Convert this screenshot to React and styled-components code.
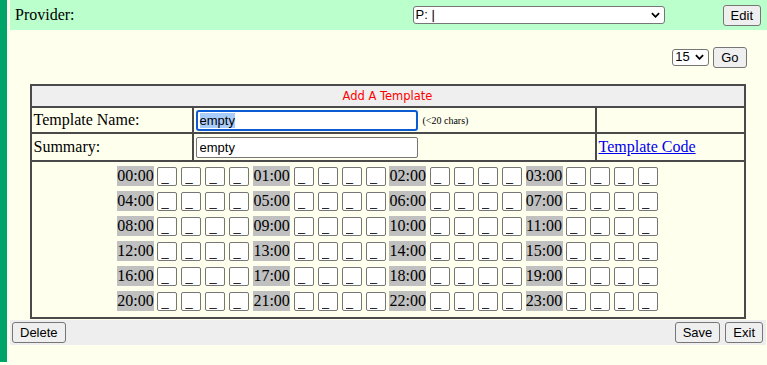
import styled, { createGlobalStyle } from 'styled-components'

const GlobalStyle = createGlobalStyle`
	html, body {
		margin: 0;
		background: #ffffee;
	}
`

const hours = Array.from({ length: 24 }, (_, i) => `${String(i).padStart(2, '0')}:00`)
const rows = [0, 1, 2, 3, 4, 5].map((r) => hours.slice(r * 4, r * 4 + 4))

function Dropdown({ width, height, value }) {
	return (
		<SelectBox>
			<Select width={width} height={height} defaultValue={value}>
				<option>{value}</option>
			</Select>
			<Chevron viewBox='0 0 10 6' aria-hidden='true'>
				<path d='M1 1l4 4 4-4' />
			</Chevron>
		</SelectBox>
	)
}

function App() {
	return (
		<Page>
			<GlobalStyle />
			<Stripe />
			<Main>
				<Header>
					<Label>Provider:</Label>
					<Dropdown width='252px' value='P: |' />
					<Button style={{ marginLeft: 58 }}>Edit</Button>
				</Header>

				<Toolbar>
					<Dropdown width='37px' height='17px' value='15' />
					<Button>Go</Button>
				</Toolbar>

				<Frame>
					<Caption>Add A Template</Caption>

					<Cell>
						<Label>Template Name:</Label>
					</Cell>
					<Cell>
						<FocusedField>
							<Selected>empty</Selected>
						</FocusedField>
						<Hint>(&lt;20 chars)</Hint>
					</Cell>
					<Cell />

					<Cell>
						<Label>Summary:</Label>
					</Cell>
					<Cell>
						<Field readOnly value='empty' />
					</Cell>
					<Cell>
						<Link href='#'>Template Code</Link>
					</Cell>

					<Schedule>
						{rows.map((row, r) => (
							<HourRow key={r}>
								{row.map((hour) => (
									<HourGroup key={hour}>
										<Hour>{hour}</Hour>
										{[0, 1, 2, 3].map((q) => (
											<Slot key={q} readOnly value='_' />
										))}
									</HourGroup>
								))}
							</HourRow>
						))}
					</Schedule>
				</Frame>

				<Footer>
					<Button>Delete</Button>
					<Spacer />
					<Button>Save</Button>
					<Button>Exit</Button>
				</Footer>
			</Main>
		</Page>
	)
}

export default App

const Page = styled.div`
	display: flex;
	width: 767px;
	height: 365px;
	background: #ffffee;
	font-family: 'Liberation Serif', 'Times New Roman', serif;
	font-size: 16px;
	color: #000;
`
const Stripe = styled.div`
	width: 7px;
	height: 362px;
	background: #00a468;
	flex: none;
`
const Main = styled.div`
	flex: 1;
	margin-left: 3px;
	display: flex;
	flex-direction: column;
`
const Header = styled.div`
	height: 30px;
	background: #bbffcc;
	display: flex;
	align-items: center;
	padding: 0 6px 0 5px;

	> span:first-child {
		flex: 1;
	}
`
const Label = styled.span`
	font-size: 16px;
`
const SelectBox = styled.div`
	position: relative;
	display: flex;
	align-items: center;
`
const Select = styled.select`
	width: ${({ width }) => width};
	height: ${({ height }) => height || '18px'};
	appearance: none;
	font-family: 'Liberation Sans', Arial, sans-serif;
	font-size: 13px;
	line-height: 14px;
	border: 1px solid #767676;
	border-radius: 3px;
	background: #fff;
	color: #000;
	padding: 0 0 0 2px;
	box-sizing: border-box;
	outline: none;
`
const Chevron = styled.svg`
	position: absolute;
	right: 5px;
	top: 50%;
	width: 9px;
	height: 6px;
	margin-top: -3px;
	fill: none;
	stroke: #000;
	stroke-width: 2;
	pointer-events: none;
`
const Button = styled.button`
	height: 21px;
	padding: 0 7px;
	font-family: 'Liberation Sans', Arial, sans-serif;
	font-size: 13px;
	color: #000;
	background: #efefef;
	border: 1px solid #767676;
	border-radius: 3px;
	box-sizing: border-box;
`
const Toolbar = styled.div`
	width: 716px;
	margin: 17px auto 0;
	height: 20px;
	display: flex;
	justify-content: flex-end;
	align-items: center;
	gap: 4px;
`
const Frame = styled.div`
	width: 716px;
	box-sizing: border-box;
	margin: 17px 0 0 19.5px;
	padding: 2px;
	gap: 2px;
	background: #4a4a4a;
	display: grid;
	grid-template-columns: 160px 401px 147px;
	grid-template-rows: 20px 24px 26px 155px;
`
const Caption = styled.div`
	grid-column: 1 / -1;
	background: #efefef;
	color: #ff0000;
	font-family: 'DejaVu Sans', Verdana, sans-serif;
	font-size: 11.5px;
	display: flex;
	align-items: center;
	justify-content: center;
`
const Cell = styled.div`
	background: #ffffee;
	display: flex;
	align-items: center;
	padding-left: 2px;
`
const Field = styled.input`
	width: 222px;
	height: 21px;
	box-sizing: border-box;
	border: 1px solid #767676;
	border-radius: 2px;
	background: #fff;
	padding: 1px 3px;
	font-family: 'Liberation Sans', Arial, sans-serif;
	font-size: 13px;
	color: #000;
	outline: none;
`
const FocusedField = styled.div`
	width: 222px;
	height: 21px;
	box-sizing: border-box;
	border: 2px solid #0b5bd3;
	border-radius: 3px;
	background: #fff;
	padding: 0 2px;
	display: flex;
	align-items: center;
	font-family: 'Liberation Sans', Arial, sans-serif;
	font-size: 13px;
`
const Selected = styled.span`
	background: #a9cdfb;
	line-height: 15px;
`
const Hint = styled.span`
	font-size: 10px;
	margin-left: 5px;
`
const Link = styled.a`
	color: #0000ee;
	text-decoration: underline;
`
const Schedule = styled.div`
	grid-column: 1 / -1;
	background: #ffffee;
	padding: 4px 0 6px;
	display: flex;
	flex-direction: column;
	align-items: center;
	gap: 5px;
`
const HourRow = styled.div`
	display: flex;
	gap: 3.7px;
`
const HourGroup = styled.div`
	display: flex;
	gap: 4px;
	align-items: center;
`
const Hour = styled.span`
	width: 37px;
	height: 20px;
	background: #c0c0c0;
	line-height: 20px;
	text-align: center;
	margin-right: -0.5px;
`
const Slot = styled.input`
	width: 20px;
	height: 19px;
	box-sizing: border-box;
	border: 1px solid #767676;
	border-radius: 2px;
	background: #fff;
	padding: 0 0 0 3px;
	font-family: 'Liberation Sans', Arial, sans-serif;
	font-size: 13px;
	color: #000;
	outline: none;
`
const Spacer = styled.div`
	flex: 1;
`
const Footer = styled.div`
	margin: 1px 1px 0 0;
	height: 25px;
	box-sizing: border-box;
	background: #eeeeee;
	display: flex;
	align-items: center;
	gap: 5px;
	padding: 0 3px 0 2px;
`
